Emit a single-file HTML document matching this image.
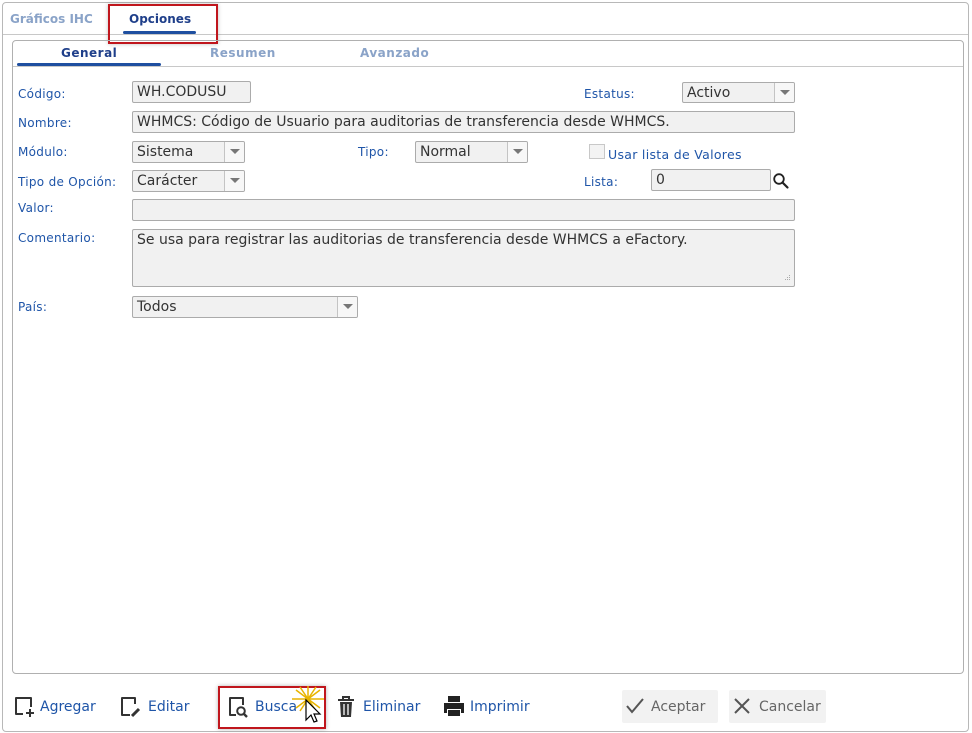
<!DOCTYPE html>
<html><head><meta charset="utf-8"><style>
*{box-sizing:border-box;margin:0;padding:0}
body{width:972px;height:733px;background:#fff;font-family:"DejaVu Sans","Liberation Sans",sans-serif;position:relative;overflow:hidden}
.a{position:absolute}
.outer{left:2px;top:2px;width:967px;height:730px;border:1px solid #b8b8b8;border-radius:4px}
.topline{left:3px;top:34px;width:965px;height:1px;background:#c8c8c8}
.panel{left:12px;top:40px;width:952px;height:634px;border:1px solid #b0b0b0;border-radius:4px}
.subline{left:13px;top:66px;width:950px;height:1px;background:#c8c8c8}
.lbl{font-size:12px;color:#1f55a8;letter-spacing:0.3px;line-height:14px}
.in{background:#f1f1f1;border:1px solid #ababab;border-radius:2px;font-size:14px;color:#333;padding-left:4px;line-height:21px;white-space:nowrap;overflow:hidden}
.dd{position:absolute;right:0;top:0;bottom:0;width:20px;border-left:1px solid #c4c4c4;background:#f7f7f7}
.dd:after{content:"";position:absolute;left:5px;top:7px;border-left:5px solid transparent;border-right:5px solid transparent;border-top:5px solid #777}
.tb{font-size:14px;color:#1f55a8;line-height:16px}
</style></head><body>
<div class="a outer"></div>
<div class="a topline"></div>
<div class="a" style="left:10px;top:12px;font-size:12px;font-weight:bold;color:#8aa3c8">Gráficos IHC</div>
<div class="a" style="left:129px;top:12px;font-size:12px;font-weight:bold;color:#1f3f8a">Opciones</div>
<div class="a" style="left:123px;top:31px;width:73px;height:3px;background:#1f4fa0;border-radius:2px"></div>
<div class="a" style="left:108px;top:4px;width:110px;height:40px;border:2px solid #c0161d;box-shadow:0 0 4px rgba(0,0,0,.25)"></div>
<div class="a panel"></div>
<div class="a subline"></div>
<div class="a" style="left:61px;top:46px;font-size:12px;font-weight:bold;color:#1f3f8a;letter-spacing:.5px">General</div>
<div class="a" style="left:17px;top:63px;width:144px;height:3px;background:#1f4fa0;border-radius:2px"></div>
<div class="a" style="left:210px;top:46px;font-size:12px;font-weight:bold;color:#8aa3c8;letter-spacing:.5px">Resumen</div>
<div class="a" style="left:360px;top:46px;font-size:12px;font-weight:bold;color:#8aa3c8;letter-spacing:.5px">Avanzado</div>

<div class="a lbl" style="left:18px;top:87px">Código:</div>
<div class="a in" style="left:132px;top:81px;width:119px;height:22px">WH.CODUSU</div>
<div class="a lbl" style="left:584px;top:87px">Estatus:</div>
<div class="a in" style="left:682px;top:82px;width:113px;height:21px;line-height:20px">Activo<div class="dd"></div></div>

<div class="a lbl" style="left:18px;top:116px">Nombre:</div>
<div class="a in" style="left:132px;top:111px;width:663px;height:22px">WHMCS: Código de Usuario para auditorias de transferencia desde WHMCS.</div>

<div class="a lbl" style="left:18px;top:145px">Módulo:</div>
<div class="a in" style="left:132px;top:141px;width:113px;height:22px">Sistema<div class="dd"></div></div>
<div class="a lbl" style="left:358px;top:145px">Tipo:</div>
<div class="a in" style="left:415px;top:141px;width:113px;height:22px">Normal<div class="dd"></div></div>
<div class="a" style="left:589px;top:144px;width:16px;height:15px;border:1px solid #c8c8c8;background:#f3f3f3"></div>
<div class="a lbl" style="left:608px;top:148px;font-size:12.5px">Usar lista de Valores</div>

<div class="a lbl" style="left:18px;top:175px">Tipo de Opción:</div>
<div class="a in" style="left:132px;top:170px;width:113px;height:22px">Carácter<div class="dd"></div></div>
<div class="a lbl" style="left:584px;top:175px">Lista:</div>
<div class="a in" style="left:651px;top:169px;width:120px;height:22px">0</div>
<svg class="a" style="left:772px;top:172px" width="18" height="18" viewBox="0 0 18 18"><circle cx="7" cy="7" r="4.8" fill="none" stroke="#222" stroke-width="1.8"/><path d="M10.5 10.5L15.5 15.5" stroke="#222" stroke-width="2.2" stroke-linecap="round"/></svg>

<div class="a lbl" style="left:18px;top:201px">Valor:</div>
<div class="a in" style="left:132px;top:199px;width:663px;height:22px"></div>

<div class="a lbl" style="left:18px;top:231px">Comentario:</div>
<div class="a in" style="left:132px;top:229px;width:663px;height:58px;line-height:20px">Se usa para registrar las auditorias de transferencia desde WHMCS a eFactory.</div>
<svg class="a" style="left:782px;top:274px" width="10" height="10"><g fill="#aaa"><rect x="7" y="1" width="1" height="1"/><rect x="5" y="3" width="1" height="1"/><rect x="7" y="3" width="1" height="1"/><rect x="3" y="5" width="1" height="1"/><rect x="5" y="5" width="1" height="1"/><rect x="7" y="5" width="1" height="1"/></g></svg>

<div class="a lbl" style="left:18px;top:300px">País:</div>
<div class="a in" style="left:132px;top:296px;width:226px;height:22px">Todos<div class="dd"></div></div>

<svg class="a" style="left:13px;top:695px" width="24" height="24" viewBox="0 0 24 24"><path d="M10 19H3V3h15v9" fill="none" stroke="#333" stroke-width="2" stroke-linejoin="round"/><path d="M17 14v8M13 18h8" stroke="#333" stroke-width="2"/></svg>
<div class="a tb" style="left:40px;top:699px">Agregar</div>
<svg class="a" style="left:118px;top:695px" width="24" height="24" viewBox="0 0 24 24"><path d="M12 20H4V3h13v6" fill="none" stroke="#333" stroke-width="2" stroke-linejoin="round"/><path d="M14 21l7-7" stroke="#333" stroke-width="3"/></svg>
<div class="a tb" style="left:148px;top:699px">Editar</div>
<div class="a" style="left:218px;top:686px;width:108px;height:43px;border:2px solid #c0161d;box-shadow:0 0 4px rgba(0,0,0,.3)"></div>
<svg class="a" style="left:226px;top:695px" width="26" height="26" viewBox="0 0 26 26"><path d="M10 20H4V3h13v7" fill="none" stroke="#333" stroke-width="2" stroke-linejoin="round"/><circle cx="15" cy="16" r="3.8" fill="none" stroke="#333" stroke-width="2"/><path d="M18 19l3 3" stroke="#333" stroke-width="2.4"/></svg>
<div class="a tb" style="left:255px;top:699px">Busca</div>
<svg class="a" style="left:292px;top:686px" width="36" height="40" viewBox="0 0 36 40"><g stroke="#e8b400" stroke-width="1.5"><path d="M4 4L28 22M28 4L4 22M16 0v26M0 13h32M8 1l16 24M24 1L8 25"/></g><path d="M14 14v20l5-5 3 7 3-1-3-7h6z" fill="#fff" stroke="#000" stroke-width="1.2"/></svg>
<svg class="a" style="left:336px;top:695px" width="20" height="24" viewBox="0 0 20 24"><path d="M2 5h16M7 5V2h6v3" stroke="#333" stroke-width="2" fill="none"/><path d="M4 7h12l-1 15H5z" fill="#333"/><path d="M8 9v11M12 9v11" stroke="#fff" stroke-width="1.3"/></svg>
<div class="a tb" style="left:363px;top:699px">Eliminar</div>
<svg class="a" style="left:442px;top:694px" width="24" height="24" viewBox="0 0 24 24"><path d="M6 2h12v6H6z" fill="#222"/><path d="M2 9h20v10h-3v-4H5v4H2z" fill="#222"/><path d="M6 16h12v6H6z" fill="#222"/></svg>
<div class="a tb" style="left:470px;top:699px">Imprimir</div>

<div class="a" style="left:622px;top:690px;width:96px;height:33px;background:#f2f2f2;border-radius:2px"></div>
<svg class="a" style="left:625px;top:697px" width="20" height="18"><path d="M2 9l5 6L18 2" fill="none" stroke="#555" stroke-width="2"/></svg>
<div class="a" style="left:651px;top:699px;font-size:14px;color:#666">Aceptar</div>
<div class="a" style="left:729px;top:690px;width:97px;height:33px;background:#f2f2f2;border-radius:2px"></div>
<svg class="a" style="left:733px;top:697px" width="18" height="18"><path d="M2 2l14 14M16 2L2 16" stroke="#555" stroke-width="2"/></svg>
<div class="a" style="left:759px;top:699px;font-size:14px;color:#666">Cancelar</div>
</body></html>
